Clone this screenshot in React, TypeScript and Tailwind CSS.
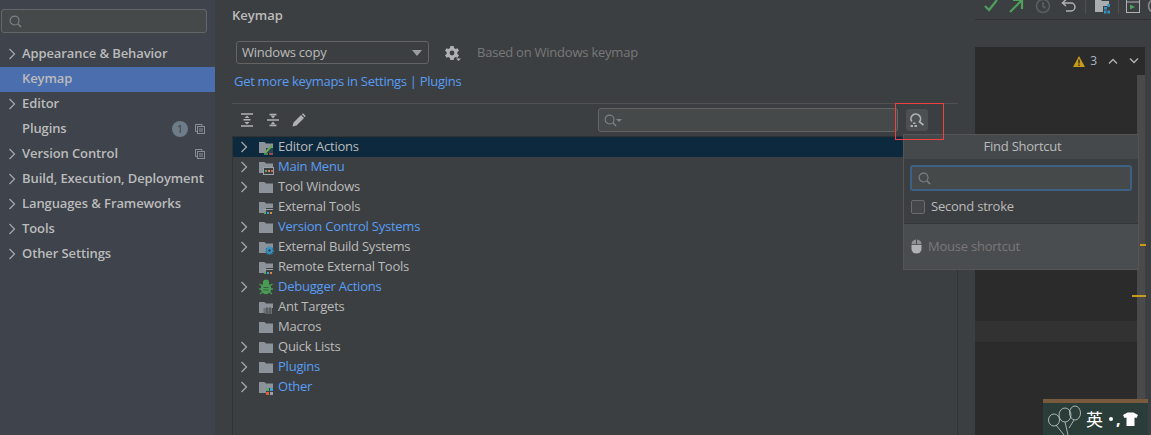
import React from "react";

const font = "font-['Open_Sans','Noto_Sans','Noto_Sans_CJK_SC',sans-serif]";

function Chevron({ className = "" }: { className?: string }) {
  return (
    <svg width="8" height="12" viewBox="0 0 8 12" className={className} fill="none" stroke="#a3a7ab" strokeWidth="1.3">
      <path d="M1.5 1 L6.5 6 L1.5 11" />
    </svg>
  );
}

function Search({ color = "#7f8386" }: { color?: string }) {
  return (
    <svg width="13" height="13" viewBox="0 0 14 14" fill="none" stroke={color} strokeWidth="1.2">
      <circle cx="6" cy="6" r="4.8" />
      <path d="M9.5 9.5 L13 13" strokeWidth="1.5" />
    </svg>
  );
}

function CopyIcon() {
  return (
    <svg width="10" height="10" viewBox="0 0 10 10" fill="none" stroke="#8a8e92" strokeWidth="1">
      <path d="M2.5 7.5 H0.5 V0.5 H7 V2" />
      <rect x="2.5" y="2.5" width="7" height="7" />
      <path d="M4 5 H8 M4 7 H8" />
    </svg>
  );
}

function Folder({ children, clip = false }: { children?: React.ReactNode; clip?: boolean }) {
  return (
    <svg width="16" height="16" viewBox="0 0 16 16" className="shrink-0">
      <path d={clip ? "M1 3 H6.5 L8 4.5 H15 V9 H8 V14 H1 Z" : "M1 3 H6.5 L8 4.5 H15 V14 H1 Z"} fill="#8b9299" />
      {children}
    </svg>
  );
}

function RowIcon({ kind }: { kind: string }) {
  if (kind === "editor")
    return (
      <Folder clip>
        <path d="M8 9 H15 V14 H8 Z" fill="#8b9299" opacity="0.25" />
        <path d="M7 14 L14 6.5" stroke="#6aa84f" strokeWidth="2" />
        <path d="M6 15 H10 " stroke="#59a869" strokeWidth="1.4" />
        <path d="M11 15 H15" stroke="#e05555" strokeWidth="1.4" />
      </Folder>
    );
  if (kind === "menu")
    return (
      <Folder clip>
        <rect x="5.5" y="8.5" width="10" height="7" fill="#3c3f41" stroke="#9aa0a6" />
        <rect x="7" y="11" width="2" height="2" fill="#59a869" />
        <rect x="10" y="11" width="2" height="2" fill="#e08a3c" />
        <rect x="13" y="11" width="2" height="2" fill="#e05555" />
      </Folder>
    );
  if (kind === "tools")
    return (
      <Folder clip>
        <path d="M5 10 H15 V11 H5 Z" fill="#9aa0a6" />
        <rect x="6" y="13" width="2" height="2" fill="#59a869" />
        <rect x="9" y="13" width="2" height="2" fill="#3f9fd8" />
        <rect x="12" y="13" width="2" height="2" fill="#e08a3c" />
      </Folder>
    );
  if (kind === "build")
    return (
      <Folder clip>
        <circle cx="11.5" cy="11.5" r="3.4" fill="#3592c4" />
        <circle cx="11.5" cy="11.5" r="4.2" fill="none" stroke="#3592c4" strokeWidth="1" strokeDasharray="1.4 1.4" />
        <circle cx="11.5" cy="11.5" r="1.2" fill="#3c3f41" />
      </Folder>
    );
  if (kind === "bug")
    return (
      <svg width="16" height="16" viewBox="0 0 16 16" className="shrink-0" stroke="#499c54" strokeWidth="1.4" fill="#499c54">
        <ellipse cx="8" cy="9.5" rx="4.5" ry="5" />
        <circle cx="8" cy="3.5" r="2.4" />
        <path d="M1.5 5 L4.5 7 M14.5 5 L11.5 7 M1 10 H4 M15 10 H12 M2 15 L5 12.5 M14 15 L11 12.5" fill="none" />
        <path d="M5.5 8.5 H10.5 M5.5 11 H10.5" stroke="#3c3f41" strokeWidth="0.7" />
      </svg>
    );
  if (kind === "ant")
    return (
      <Folder clip>
        <rect x="7" y="9" width="7" height="6" fill="#8b9299" />
        <path d="M5.5 10 H15.5 M5.5 12 H15.5 M5.5 14 H15.5 M9 8 V16 M12 8 V16" stroke="#3c3f41" strokeWidth="0.8" />
      </Folder>
    );
  if (kind === "other")
    return (
      <Folder clip>
        <rect x="8" y="9" width="3" height="3" fill="#59a869" />
        <rect x="12" y="9" width="3" height="3" fill="#3f9fd8" />
        <rect x="8" y="13" width="3" height="3" fill="#e05a3c" />
        <rect x="12" y="13" width="3" height="3" fill="#9aa0a6" />
      </Folder>
    );
  return <Folder />;
}

const sideItems = [
  { t: "Appearance & Behavior", c: true },
  { t: "Keymap", sel: true },
  { t: "Editor", c: true },
  { t: "Plugins", badge: true, copy: true },
  { t: "Version Control", c: true, copy: true },
  { t: "Build, Execution, Deployment", c: true },
  { t: "Languages & Frameworks", c: true },
  { t: "Tools", c: true },
  { t: "Other Settings", c: true },
];

const rows = [
  { t: "Editor Actions", k: "editor", c: true, sel: true },
  { t: "Main Menu", k: "menu", c: true, blue: true },
  { t: "Tool Windows", k: "folder", c: true },
  { t: "External Tools", k: "tools" },
  { t: "Version Control Systems", k: "folder", c: true, blue: true },
  { t: "External Build Systems", k: "build", c: true },
  { t: "Remote External Tools", k: "tools" },
  { t: "Debugger Actions", k: "bug", c: true, blue: true },
  { t: "Ant Targets", k: "ant" },
  { t: "Macros", k: "folder" },
  { t: "Quick Lists", k: "folder", c: true },
  { t: "Plugins", k: "folder", c: true, blue: true },
  { t: "Other", k: "other", c: true, blue: true },
];

export default function App() {
  return (
    <div className={`relative flex h-[435px] w-[1151px] overflow-hidden bg-[#3c3f41] text-[13px] text-[#bbbbbb] ${font}`}>
      {/* Sidebar */}
      <aside className="flex w-[215px] shrink-0 flex-col bg-[#3e434c]">
        <div className="mx-[1px] mt-[9px] flex h-[24px] w-[206px] items-center rounded-[3px] border border-[#63676a] bg-[#45494a] pl-[7px]">
          <Search />
        </div>
        <div className="mt-[9px] flex flex-col">
          {sideItems.map((s) => (
            <div key={s.t} className={`flex h-[25px] items-center pb-[2px] ${s.sel ? "bg-[#4b6eaf]" : ""}`}>
              <div className="flex w-[22px] shrink-0 justify-center pl-[2px]">{s.c && <Chevron />}</div>
              <span className="font-semibold whitespace-nowrap text-[#bbbbbb] tracking-[-0.1px]">{s.t}</span>
              <div className="ml-auto flex items-center">
                {s.badge && (
                  <span className="mr-[7px] flex h-[16px] w-[16px] items-center justify-center rounded-full bg-[#6e7b88] text-[11px] leading-none text-[#3c3f41]">
                    1
                  </span>
                )}
                {s.copy && (
                  <span className="mr-[10px]">
                    <CopyIcon />
                  </span>
                )}
              </div>
            </div>
          ))}
        </div>
      </aside>

      {/* Settings main panel */}
      <main className="flex w-[760px] shrink-0 flex-col pl-[17px] pr-[17px] tracking-[-0.23px]">
        <h1 className="mt-[5px] h-[20px] text-[13px] leading-[20px] font-semibold tracking-normal text-[#bbbbbb]">Keymap</h1>
        <div className="mt-[16px] flex h-[23px] items-center pl-[4px]">
          <div className="flex h-[23px] w-[193px] items-center justify-between rounded-[3px] border border-[#646464] bg-[#3c3f41] pl-[5px] pr-[6px]">
            <span className="text-[#bbbbbb]">Windows copy</span>
            <span className="h-0 w-0 border-x-[5px] border-t-[6px] border-x-transparent border-t-[#9a9da1]" />
          </div>
          <svg width="18" height="16" viewBox="0 0 18 16" className="ml-[15px]" fill="#afb1b3">
            <path d="M6.3 1 H9.7 L10 3 L11.6 3.9 L13.5 3.2 L15 5.8 L13.4 7.1 V8.9 L15 10.2 L13.5 12.8 L11.6 12.1 L10 13 L9.7 15 H6.3 L6 13 L4.4 12.1 L2.5 12.8 L1 10.2 L2.6 8.9 V7.1 L1 5.8 L2.5 3.2 L4.4 3.9 L6 3 Z M8 5.6 A2.4 2.4 0 1 0 8 10.4 A2.4 2.4 0 1 0 8 5.6 Z" fillRule="evenodd" />
            <path d="M12 13.5 H17 L14.5 16 Z" />
          </svg>
          <span className="ml-[15px] text-[#787878]">Based on Windows keymap</span>
        </div>
        <div className="mt-[7px] h-[20px] pl-[2px] leading-[20px] tracking-[-0.29px] text-[#589df6]">Get more keymaps in Settings | Plugins</div>
        <div className="mt-[12px] flex h-[33px] items-center border-t border-[#515151] pl-[8px]">
          <svg width="14" height="14" viewBox="0 0 14 14" stroke="#afb1b3" fill="#afb1b3" strokeWidth="1.4">
            <path d="M1 1 H13 M1 13 H13 M3.5 6.8 H10.5" fill="none" />
            <path d="M7 2.5 L9.5 5 H4.5 Z M7 11.5 L9.5 9 H4.5 Z" stroke="none" />
          </svg>
          <svg width="14" height="14" viewBox="0 0 14 14" className="ml-[12px]" stroke="#afb1b3" fill="#afb1b3" strokeWidth="1.4">
            <path d="M1 7 H13 M3.5 1.5 H10.5 M3.5 12.5 H10.5" fill="none" />
            <path d="M7 5.5 L4.5 2.5 H9.5 Z M7 8.5 L4.5 11.5 H9.5 Z" stroke="none" />
          </svg>
          <svg width="14" height="14" viewBox="0 0 14 14" className="ml-[12px]" fill="#afb1b3">
            <path d="M0.5 13.5 L1.5 9.5 L9 2 L12 5 L4.5 12.5 Z M9.8 1.2 L11 0.3 L13.7 3 L12.8 4.2 Z" />
          </svg>
          <div className="ml-[292px] flex h-[24px] w-[300px] items-center rounded-[3px] border border-[#646464] bg-[#45494a] pl-[5px]">
            <Search />
            <span className="ml-[-1px] h-0 w-0 border-x-[3px] border-t-[3px] border-x-transparent border-t-[#7f8386]" />
          </div>
          <div className="ml-[8px] flex h-[22px] w-[22px] items-center justify-center rounded-[3px] bg-[#4c5052]">
            <svg width="16" height="16" viewBox="0 0 16 16" fill="none" stroke="#afb1b3" strokeWidth="1.7">
              <path d="M2.8 9.5 A4.8 4.8 0 1 1 10.5 9.8 L14.5 13" />
              <path d="M1.5 13 H4 V15 H1.5 Z M5.5 13 H8 V15 H5.5 Z M4 10.5 H6.5 V12 H4 Z" fill="#afb1b3" stroke="none" />
            </svg>
          </div>
        </div>
        <div className="flex flex-1 flex-col border-t border-l border-r border-t-[#2f3133] border-[#323232]">
          {rows.map((r) => (
            <div key={r.t} className={`flex h-[20px] shrink-0 items-center ${r.sel ? "bg-[#0d293e]" : ""}`}>
              <div className="flex w-[25px] shrink-0 justify-center pr-[3px]">{r.c && <Chevron />}</div>
              <RowIcon kind={r.k} />
              <span className={`ml-[4px] whitespace-nowrap ${r.blue ? "text-[#589df6]" : "text-[#bbbbbb]"}`}>{r.t}</span>
            </div>
          ))}
        </div>
      </main>

      {/* Right editor region */}
      <section className="flex min-w-0 flex-1 flex-col">
        <div className="flex h-[20px] shrink-0 items-center overflow-hidden border-b border-[#323232] pb-[7px] text-[#afb1b3]">
          <svg width="16" height="16" viewBox="0 0 16 16" className="ml-[8px] shrink-0" fill="none" stroke="#4e9e5c" strokeWidth="2.2">
            <path d="M2 8 L6 12 L14 2" />
          </svg>
          <svg width="16" height="16" viewBox="0 0 16 16" className="ml-[9px] shrink-0" fill="none" stroke="#4e9e5c" strokeWidth="2.2">
            <path d="M2 14 L13 3 M5 2 H14 V11" />
          </svg>
          <svg width="16" height="16" viewBox="0 0 16 16" className="ml-[11px] shrink-0" fill="none" stroke="#5c5f61" strokeWidth="1.6">
            <circle cx="8" cy="8" r="6.5" />
            <path d="M8 4 V8.5 L10.5 10" />
          </svg>
          <svg width="16" height="16" viewBox="0 0 16 16" className="ml-[10px] shrink-0" fill="none" stroke="#afb1b3" strokeWidth="1.5">
            <path d="M2 5 H10 A4 4 0 0 1 10 13 H5 M5 1.5 L1.5 5 L5 8" />
          </svg>
          <span className="ml-[8px] h-[16px] w-px shrink-0 bg-[#515151]" />
          <svg width="16" height="16" viewBox="0 0 16 16" className="ml-[8px] shrink-0">
            <path d="M1 1 H6 L8 3 H15 V8 H9 V14 H1 Z" fill="#a9adb1" />
            <rect x="10" y="9" width="3" height="2.5" fill="#3592c4" />
            <rect x="13.5" y="6" width="2.5" height="3" fill="#3592c4" />
            <rect x="10" y="12.5" width="2.5" height="3" fill="#3592c4" />
            <rect x="13.5" y="12.5" width="2.5" height="3" fill="#3592c4" />
          </svg>
          <span className="ml-[8px] h-[16px] w-px shrink-0 bg-[#515151]" />
          <svg width="14" height="14" viewBox="0 0 14 14" className="ml-[7px] shrink-0" fill="none" stroke="#afb1b3">
            <rect x="0.5" y="0.5" width="13" height="13" />
            <path d="M0.5 3 H13.5" />
            <path d="M4 5.5 L9 8 L4 10.5 Z" fill="#4e9e5c" stroke="none" />
          </svg>
          <svg width="16" height="16" viewBox="0 0 16 16" className="ml-[7px] shrink-0" fill="none" stroke="#8a8e92" strokeWidth="1.5">
            <circle cx="8" cy="8" r="6.5" />
          </svg>
        </div>
        <div className="h-[27px] shrink-0 bg-[#3c3f41]" />
        <div className="flex min-h-0 flex-1">
          <div className="flex min-w-0 flex-1 flex-col bg-[#2b2b2b]">
            <div className="flex h-[28px] shrink-0 items-center justify-end pr-[6px] text-[12px] text-[#a9b7c6]">
              <svg width="12" height="11" viewBox="0 0 12 11">
                <path d="M6 0 L12 11 H0 Z" fill="#c79b1a" />
                <path d="M5.3 3.5 H6.7 V7.5 H5.3 Z M5.3 8.5 H6.7 V10 H5.3 Z" fill="#2b2b2b" />
              </svg>
              <span className="ml-[5px]">3</span>
              <svg width="10" height="6" viewBox="0 0 10 6" className="ml-[11px]" fill="none" stroke="#afb1b3" strokeWidth="1.4">
                <path d="M1 5.5 L5 1.5 L9 5.5" />
              </svg>
              <svg width="10" height="6" viewBox="0 0 10 6" className="ml-[11px]" fill="none" stroke="#afb1b3" strokeWidth="1.4">
                <path d="M1 0.5 L5 4.5 L9 0.5" />
              </svg>
            </div>
            <div className="flex min-h-0 flex-1">
              <div className="min-w-0 flex-1">
                <div className="mt-[246px] h-[21px] bg-[#323232]" />
              </div>
              <div className="w-[8px] shrink-0 bg-[#4a4a4a]" />
            </div>
          </div>
          <div className="w-[6px] shrink-0 bg-[#3c3f41]" />
        </div>
      </section>

      {/* Find Shortcut popup */}
      <div className="absolute left-[903px] top-[134px] flex h-[136px] w-[236px] flex-col border border-[#555555] bg-[#3c3f41] tracking-[-0.23px]">
        <div className="flex h-[24px] shrink-0 items-center justify-center bg-[#45494c] pl-[3px] text-[#bbbbbb]">Find Shortcut</div>
        <div className="mx-[6px] mt-[6px] flex h-[26px] shrink-0 items-center rounded-[3px] border-2 border-[#3d6185] bg-[#45494a] pl-[6px]">
          <Search />
        </div>
        <div className="mt-[5px] flex h-[22px] shrink-0 items-center pl-[7px]">
          <span className="h-[14px] w-[14px] rounded-[2px] border border-[#6b6b6b] bg-[#43474a]" />
          <span className="ml-[6px] text-[#bbbbbb]">Second stroke</span>
        </div>
        <div className="mt-[5px] flex flex-1 items-center border-t border-[#333537] bg-[#4a4d50] pl-[7px]">
          <svg width="11" height="15" viewBox="0 0 11 15">
            <path d="M0.5 6 V10 A5 4.5 0 0 0 10.5 10 V6 Z" fill="#afb1b3" />
            <path d="M0.5 5.2 A5 5 0 0 1 5 0.5 V5.2 Z M6 0.5 A5 5 0 0 1 10.5 5.2 H6 Z" fill="#8f9295" />
          </svg>
          <span className="ml-[6px] text-[#787878]">Mouse shortcut</span>
        </div>
      </div>

      {/* Red annotation box */}
      <div className="absolute left-[895px] top-[103px] h-[37px] w-[49px] border border-[#f04040]" />

      {/* Gutter marks */}
      <div className="absolute left-[1140px] top-[244px] h-[2px] w-[6px] bg-[#c79b1a]" />
      <div className="absolute left-[1132px] top-[295px] h-[2px] w-[14px] bg-[#c79b1a]" />

      {/* IME widget */}
      <div className="absolute left-[1043px] top-[399px] flex h-[36px] w-[105px] flex-col bg-[#2b3d38]">
        <div className="h-[4px] bg-[#7a5a3c]" />
        <div className="flex flex-1 items-center overflow-hidden text-white">
          <svg width="36" height="32" viewBox="0 0 36 32" fill="none" stroke="#c9d2ce" strokeWidth="0.8" className="ml-[3px] shrink-0">
            <ellipse cx="8" cy="17" rx="5.5" ry="6" />
            <ellipse cx="19" cy="12" rx="6" ry="7" />
            <ellipse cx="29" cy="10" rx="5.5" ry="7" />
            <path d="M10 22 L18 32 M19 19 L22 32 M28 17 L23 25" />
          </svg>
          <span className="ml-[4px] text-[17px] leading-none">英</span>
          <span className="ml-[6px] h-[4px] w-[4px] rounded-full bg-white" />
          <span className="ml-[3px] text-[16px] font-bold leading-none">,</span>
          <svg width="15" height="14" viewBox="0 0 15 14" fill="white" className="ml-[2px] shrink-0">
            <path d="M4.5 0.5 H10.5 L15 3 L13.5 6 L11.5 5.5 V14 H3.5 V5.5 L1.5 6 L0 3 Z" />
          </svg>
        </div>
      </div>
    </div>
  );
}
